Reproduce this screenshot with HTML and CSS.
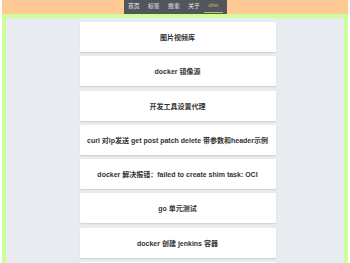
FILE: index.html
```html
<!DOCTYPE html>
<html lang="zh-CN">
<head>
  <meta charset="UTF-8" />
  <title>文章列表</title>
  <meta name="viewport" content="width=device-width, initial-scale=1.0" />
  <link rel="stylesheet" href="styles.css">
</head>
<body>
  <header class="top">
    <nav class="nav">
      <a href="#">首页</a>
      <a href="#">标签</a>
      <a href="#">搜索</a>
      <a href="#">关于</a>
      <a href="#" class="active">other</a>
    </nav>
  </header>
  <main class="main">
    <div class="list">
      <a class="card" href="#">图片视频库</a>
      <a class="card" href="#">docker 镜像源</a>
      <a class="card" href="#">开发工具设置代理</a>
      <a class="card" href="#">curl 对ip发送 get post patch delete 带参数和header示例</a>
      <a class="card" href="#">docker 解决报错：failed to create shim task: OCI</a>
      <a class="card" href="#">go 单元测试</a>
      <a class="card" href="#">docker 创建 jenkins 容器</a>
      <a class="card" href="#">docker compose 常用命令</a>
    </div>
  </main>
</body>
</html>
```

FILE: styles.css
```css
body {
  margin: 0;
  padding: 0 2px 0 1.5px;
  background: #ffffff;
  font-family: "Liberation Sans", "Noto Sans CJK SC", sans-serif;
  color: #333;
}
.top {
  background: #ffc995;
  height: 14px;
  display: flex;
  justify-content: center;
}
.nav {
  background: #50565c;
  height: 13.5px;
  display: flex;
  align-items: center;
  gap: 8.5px;
  padding: 0 4px;
  margin-left: 1px;
}
.nav a {
  color: #f0f0f0;
  font-size: 5.8px;
  text-decoration: none;
  line-height: 13.5px;
}
.nav a.active {
  color: #d6b850;
  font-size: 4.5px;
  border-bottom: 1px solid #d6b850;
  line-height: 12px;
  padding: 0 4px;
  margin-left: -4px;
}
.main {
  border: 4px solid #ccff99;
  border-left-width: 4.5px;
  border-bottom: none;
  background: #e8ecf1;
  min-height: 260px;
}
.list {
  display: flex;
  flex-direction: column;
  gap: 4.3px;
  width: 196px;
  margin-left: 74px;
  padding-top: 4px;
}
.card {
  display: flex;
  align-items: center;
  justify-content: center;
  height: 30px;
  background: #ffffff;
  border-radius: 1px;
  box-shadow: 0 1px 1.5px rgba(0, 0, 0, 0.12);
  font-size: 7px;
  font-weight: bold;
  color: #333333;
  text-decoration: none;
  white-space: nowrap;
}
```
